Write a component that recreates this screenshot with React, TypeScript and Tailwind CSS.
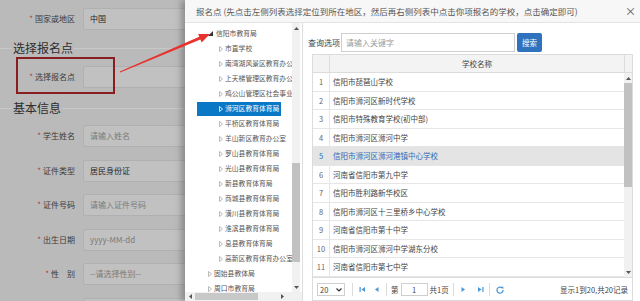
import React from 'react';

const cjk = "font-['Noto_Sans_CJK_SC','Noto_Sans',sans-serif]";

type Node = { t: string; lv: 0 | 1; open?: boolean; sel?: boolean };

const tree: Node[] = [
  { t: '信阳市教育局', lv: 0, open: true },
  { t: '市直学校', lv: 1 },
  { t: '南湾湖风景区教育办公室', lv: 1 },
  { t: '上天梯管理区教育办公室', lv: 1 },
  { t: '鸡公山管理区社会事业局', lv: 1 },
  { t: '浉河区教育体育局', lv: 1, sel: true },
  { t: '平桥区教育体育局', lv: 1 },
  { t: '羊山新区教育办公室', lv: 1 },
  { t: '罗山县教育体育局', lv: 1 },
  { t: '光山县教育体育局', lv: 1 },
  { t: '新县教育体育局', lv: 1 },
  { t: '商城县教育体育局', lv: 1 },
  { t: '潢川县教育体育局', lv: 1 },
  { t: '淮滨县教育体育局', lv: 1 },
  { t: '息县教育体育局', lv: 1 },
  { t: '高新区教育体育办公室', lv: 1 },
  { t: '固始县教体局', lv: 0 },
  { t: '周口市教育局', lv: 0 },
];

const schools = [
  '信阳市琵琶山学校',
  '信阳市浉河区新时代学校',
  '信阳市特殊教育学校(初中部)',
  '信阳市浉河区浉河中学',
  '信阳市浉河区浉河港镇中心学校',
  '河南省信阳市第九中学',
  '信阳市胜利路新华校区',
  '信阳市浉河区十三里桥乡中心学校',
  '河南省信阳市第十中学',
  '信阳市浉河区浉河中学湖东分校',
  '河南省信阳市第七中学',
];

function Field({ label, value, ph, className }: { label: string; value?: string; ph?: string; className: string }) {
  return (
    <div className={`flex items-center h-[22px] shrink-0 ${className}`}>
      <div className="w-[75px] shrink-0 text-right text-[8px] leading-none text-[#3a3a3a] whitespace-nowrap">
        <span className="text-[#b53b3b] mr-[2px]">*</span>
        {label}
      </div>
      <div className="ml-[8px] w-[200px] h-full shrink-0 bg-[#c1c1c1] border border-[#b0b0b0] rounded-[2px] flex items-center pl-[6px] text-[8px]">
        <span className={value ? 'text-[#262626]' : 'text-[#7b7b7b]'}>{value ?? ph}</span>
      </div>
    </div>
  );
}

function Heading({ text, className }: { text: string; className: string }) {
  return (
    <div className={`h-[20px] flex items-center shrink-0 ${className}`}>
      <div className="w-[12px] h-px bg-[#c7c7c7]" />
      <span className="px-[1px] text-[12px] leading-none text-[#2e2e2e]">{text}</span>
      <div className="flex-1 h-px bg-[#c7c7c7]" />
    </div>
  );
}

function Caret({ open, sel }: { open?: boolean; sel?: boolean }) {
  if (open)
    return (
      <svg width="5" height="5" viewBox="0 0 5 5" className="shrink-0">
        <polygon points="5,0 5,5 0,5" fill="#333" />
      </svg>
    );
  return (
    <svg width="4" height="6" viewBox="0 0 4 6" className="shrink-0">
      <polygon points="0.5,0.5 3.5,3 0.5,5.5" fill="none" stroke={sel ? '#fff' : '#aaa'} strokeWidth="0.8" />
    </svg>
  );
}

function Arrow({ dir, bar }: { dir: 'l' | 'r'; bar?: boolean }) {
  return (
    <svg width="7" height="7" viewBox="0 0 7 7" className="shrink-0">
      {dir === 'l' ? (
        <>
          {bar && <rect x="0.5" y="1" width="1.2" height="5" fill="#4a98d9" />}
          <polygon points={bar ? '6,1 2.5,3.5 6,6' : '5.5,1 2,3.5 5.5,6'} fill="#4a98d9" />
        </>
      ) : (
        <>
          <polygon points={bar ? '1,1 4.5,3.5 1,6' : '1.5,1 5,3.5 1.5,6'} fill="#4a98d9" />
          {bar && <rect x="5.3" y="1" width="1.2" height="5" fill="#4a98d9" />}
        </>
      )}
    </svg>
  );
}

function SmallTri({ d }: { d: 'u' | 'd' | 'l' | 'r' }) {
  const pts = { u: '0,4 2.5,1 5,4', d: '0,1 2.5,4 5,1', l: '4,0 1,2.5 4,5', r: '1,0 4,2.5 1,5' }[d];
  return (
    <svg width="5" height="5" viewBox="0 0 5 5">
      <polygon points={pts} fill="#555" />
    </svg>
  );
}

export default function App() {
  return (
    <div className={`relative w-[640px] h-[301px] overflow-hidden flex bg-[#bababa] ${cjk}`}>
      {/* page behind the dialog */}
      <div className="w-[185px] shrink-0 overflow-hidden flex flex-col pt-[8px]">
        <Field label="国家或地区" value="中国" className="" />
        <Heading text="选择报名点" className="mt-[8px]" />
        <Field label="选择报名点" ph="" className="mt-[8px]" />
        <Heading text="基本信息" className="mt-[10px]" />
        <Field label="学生姓名" ph="请输入姓名" className="mt-[7px]" />
        <Field label="证件类型" value="居民身份证" className="mt-[13px]" />
        <Field label="证件号码" ph="请输入证件号码" className="mt-[12px]" />
        <Field label="出生日期" ph="yyyy-MM-dd" className="mt-[13px]" />
        <Field label={'性\u3000别'} ph="--请选择性别--" className="mt-[12px]" />
        <div className="mt-[13px] ml-[83px] w-[200px] h-[22px] shrink-0 bg-[#c1c1c1] border border-[#b0b0b0] rounded-[2px]" />
      </div>

      {/* dialog */}
      <div className="flex-1 flex flex-col bg-white shadow-[-4px_0_6px_rgba(0,0,0,0.25)]">
        <div className="h-[23px] shrink-0 bg-[#f7f7f7] border-b border-[#e3e3e3] flex items-center justify-between pl-[11px] pr-[4px]">
          <span className="text-[8.5px] text-[#555] whitespace-nowrap">
            报名点 (先点击左侧列表选择定位到所在地区，然后再右侧列表中点击你项报名的学校，点击确定即可)
          </span>
          <span className="text-[11px] leading-none text-[#555]">×</span>
        </div>

        <div className="flex-1 flex min-h-0">
          {/* tree */}
          <div className="w-[118px] shrink-0 flex flex-col border-r border-[#dedede]">
            <div className="flex-1 flex min-h-0">
              <div className="w-[107px] shrink-0 overflow-hidden pt-[3px]">
                {tree.map((n) => (
                  <div key={n.t} className="h-[15px] flex items-center">
                    <div
                      className={`ml-[12px] h-[14px] flex items-center pr-[2px] whitespace-nowrap text-[6.8px] ${
                        n.lv === 0 ? 'pl-[11px]' : 'pl-[22px]'
                      } ${n.sel ? 'bg-[#0b78c6] text-white' : 'text-[#555]'} ${n.open ? 'gap-[3px]' : 'gap-[2px]'}`}
                    >
                      <Caret open={n.open} sel={n.sel} />
                      <span>{n.t}</span>
                    </div>
                  </div>
                ))}
              </div>
              <div className="w-[8px] shrink-0 bg-[#f1f1f1] flex flex-col">
                <div className="h-[10px] flex items-center justify-center">
                  <SmallTri d="u" />
                </div>
                <div className="h-[130px]" />
                <div className="h-[99px] bg-[#c1c1c1]" />
                <div className="flex-1" />
                <div className="h-[10px] flex items-center justify-center">
                  <SmallTri d="d" />
                </div>
              </div>
            </div>
            <div className="h-[9px] shrink-0 bg-[#f1f1f1] flex items-center">
              <div className="w-[10px] flex justify-center">
                <SmallTri d="l" />
              </div>
              <div className="w-[63px] h-[7px] bg-[#c8c8c8]" />
              <div className="flex-1" />
              <div className="w-[12px] flex justify-center">
                <SmallTri d="r" />
              </div>
              <div className="w-[14px]" />
            </div>
          </div>

          {/* list */}
          <div className="flex-1 flex flex-col pl-[5px] pr-[7px] pt-[10px] min-w-0">
            <div className="h-[19px] shrink-0 flex items-center">
              <span className="w-[33px] text-[8px] text-[#444] whitespace-nowrap">查询选项</span>
              <div className="w-[174px] h-full border border-[#cfcfcf] flex items-center pl-[4px] text-[8px] text-[#999]">
                请输入关键字
              </div>
              <div className="ml-[2px] w-[25px] h-full bg-[#2f72bd] rounded-[2px] flex items-center justify-center text-[7.5px] text-white">
                搜索
              </div>
            </div>

            <div className="mt-[2px] ml-[4px] flex-1 border border-[#dcdcdc] flex flex-col min-h-0 text-[7.5px]">
              <div className="h-[18px] shrink-0 flex bg-[#f3f3f3] border-b border-[#dcdcdc]">
                <div className="w-[17px] border-r border-[#dcdcdc]" />
                <div className="flex-1 flex items-center justify-center text-[#444]">学校名称</div>
                <div className="w-[8px] border-l border-[#dcdcdc]" />
              </div>
              <div className="h-[204px] shrink-0 flex">
                <div className="flex-1 flex flex-col">
                  {schools.map((s, i) => (
                    <div
                      key={s}
                      className={`h-[18.5px] flex border-b border-[#e6e6e6] ${i === 4 ? 'bg-[#e4e4e4] text-[#2d6bb8]' : 'text-[#444]'}`}
                    >
                      <div className={`w-[17px] border-r border-[#e6e6e6] flex items-center justify-center ${i === 4 ? 'text-[#2d6bb8]' : 'text-[#666]'}`}>
                        {i + 1}
                      </div>
                      <div className="flex-1 flex items-center pl-[3px] whitespace-nowrap">{s}</div>
                    </div>
                  ))}
                </div>
                <div className="w-[8px] shrink-0 bg-[#f1f1f1] flex flex-col">
                  <div className="h-[10px] flex items-center justify-center">
                    <SmallTri d="u" />
                  </div>
                  <div className="h-[104px] bg-[#c1c1c1]" />
                  <div className="flex-1" />
                  <div className="h-[10px] flex items-center justify-center">
                    <SmallTri d="d" />
                  </div>
                </div>
              </div>
              <div className="flex-1 border-t border-[#dcdcdc] flex items-start pt-[5px] px-[4px] text-[#444]">
                <div className="w-[28px] h-[13px] border border-[#cfcfcf] flex items-center justify-between px-[2px]">
                  <span>20</span>
                  <svg width="6" height="4" viewBox="0 0 6 4">
                    <polyline points="0.5,0.5 3,3 5.5,0.5" fill="none" stroke="#333" strokeWidth="1.2" />
                  </svg>
                </div>
                <div className="ml-[7px] w-px h-[13px] bg-[#dcdcdc]" />
                <div className="ml-[6px] h-[13px] flex items-center">
                  <Arrow dir="l" bar />
                </div>
                <div className="ml-[7px] h-[13px] flex items-center">
                  <Arrow dir="l" />
                </div>
                <div className="ml-[6px] w-px h-[13px] bg-[#dcdcdc]" />
                <span className="ml-[4px] h-[13px] flex items-center">第</span>
                <div className="ml-[2px] w-[27px] h-[13px] border border-[#cfcfcf] flex items-center justify-center">1</div>
                <span className="ml-[2px] h-[13px] flex items-center">共1页</span>
                <div className="ml-[4px] w-px h-[13px] bg-[#dcdcdc]" />
                <div className="ml-[6px] h-[13px] flex items-center">
                  <Arrow dir="r" />
                </div>
                <div className="ml-[10px] h-[13px] flex items-center">
                  <Arrow dir="r" bar />
                </div>
                <div className="ml-[5px] w-px h-[13px] bg-[#dcdcdc]" />
                <div className="ml-[6px] h-[13px] flex items-center">
                  <svg width="8" height="8" viewBox="0 0 8 8">
                    <path d="M6.3 2.2 A3 3 0 1 0 7 4" fill="none" stroke="#4a98d9" strokeWidth="1.3" />
                    <polygon points="5,0.8 7.4,0.8 7.4,3.2" fill="#4a98d9" />
                  </svg>
                </div>
                <span className="ml-auto h-[13px] flex items-center whitespace-nowrap">显示1到20,共20记录</span>
              </div>
            </div>
          </div>
        </div>
      </div>

      {/* annotations */}
      <div className="absolute left-[16px] top-[57px] w-[99px] h-[37px] border-2 border-[#8a1d1d]" />
      <svg className="absolute left-0 top-0 pointer-events-none" width="640" height="301" viewBox="0 0 640 301">
        <polygon
          points="119.8,71.5 199.3,36.8 198.1,34.1 210,34 201.6,42.4 200.4,39.6 120.2,72.5"
          fill="#e8322c"
        />
      </svg>
    </div>
  );
}
